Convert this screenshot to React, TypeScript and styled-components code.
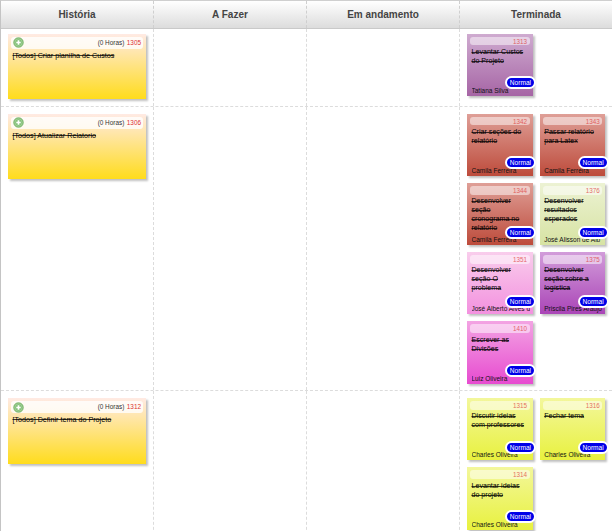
import React from 'react';
import styled, { createGlobalStyle } from 'styled-components';

const GlobalStyle = createGlobalStyle`
  * { box-sizing: border-box; }
  body { margin: 0; background: #fff; overflow: hidden; font-family: "Liberation Sans", Arial, sans-serif; }
`;

const Board = styled.main`
  width: 612px;
  height: 531px;
  overflow: hidden;
  border-left: 1px solid #c4c4c4;
  border-top: 1px solid #cfcfcf;
`;

const Columns = styled.div`
  display: grid;
  grid-template-columns: repeat(4, 153px);
`;

const HeaderRow = styled(Columns)`
  height: 28px;
  border-bottom: 1px solid #c9c9c9;
  background: linear-gradient(#ffffff, #dcdcdc);
`;

const Heading = styled.div`
  display: flex;
  align-items: center;
  justify-content: center;
  border-right: 1px dashed #cfcfcf;
  color: #444;
  font-size: 10px;
  line-height: 12px;
  font-weight: bold;
`;

const StoryRow = styled(Columns)<{ $height: number; $pad: number }>`
  height: ${p => p.$height}px;
  border-bottom: 1px dashed #dcdcdc;
  & > div { padding-top: ${p => p.$pad}px; }
`;

const Cell = styled.div`
  border-right: 1px dashed #dcdcdc;
  padding-left: 7px;
`;

const TaskCell = styled(Cell)`
  display: grid;
  grid-template-columns: 65.5px 65.5px;
  grid-auto-rows: 62.3px;
  align-content: start;
  gap: 7px 7.2px;
`;

const StoryCard = styled.article`
  width: 138px;
  height: 65.5px;
  padding: 3px;
  background: linear-gradient(#ffeae4, #ffdc1c);
  box-shadow: 1.5px 1.5px 2px rgba(0, 0, 0, 0.25);
`;

const StoryBar = styled.div`
  display: flex;
  align-items: center;
  height: 12px;
  padding: 0 2px;
  border-radius: 3px;
  background: rgba(255, 255, 255, 0.8);
`;

const Hours = styled.span`
  margin-left: auto;
  color: #333;
  font-size: 6.4px;
  line-height: 8px;
`;

const StoryId = styled.span`
  margin-left: 2.5px;
  color: #dc3131;
  font-size: 6.4px;
  line-height: 8px;
`;

const StoryTitle = styled.div`
  margin: 2px 0 0 1.5px;
  color: #000;
  font-size: 7.2px;
  line-height: 9px;
  white-space: nowrap;
  text-decoration: line-through rgba(0, 0, 0, 0.75);
`;

const TaskCard = styled.article<{ $from: string; $to: string }>`
  position: relative;
  display: flex;
  flex-direction: column;
  padding: 3px 3px 0;
  background: linear-gradient(${p => p.$from}, ${p => p.$to});
  box-shadow: 1.5px 1.5px 2px rgba(0, 0, 0, 0.25);
`;

const TaskId = styled.div`
  height: 8.8px;
  padding-right: 2.5px;
  border-radius: 3px;
  background: rgba(255, 255, 255, 0.5);
  color: #dc3131;
  text-align: right;
  font-size: 6.3px;
  line-height: 9px;
  & > span { opacity: 0.7; }
`;

const TaskTitle = styled.div`
  margin: 2.5px 0 0 1.5px;
  color: #000;
  font-size: 7.1px;
  line-height: 9px;
  white-space: pre;
  text-decoration: line-through rgba(0, 0, 0, 0.75);
`;

const Owner = styled.div`
  position: absolute;
  left: 4.5px;
  right: 3px;
  bottom: 1px;
  height: 8px;
  overflow: hidden;
  color: #111;
  font-size: 6.5px;
  line-height: 8px;
  white-space: nowrap;
`;

const Badge = styled.span`
  position: absolute;
  right: -3.4px;
  bottom: 6.7px;
  width: 31px;
  height: 13px;
  border: 2px solid #fff;
  border-radius: 7px;
  background: #0000e8;
  color: #fff;
  text-align: center;
  font-size: 6.6px;
  line-height: 9px;
`;

const AddGlyph = styled.svg`
  flex: none;
  width: 11px;
  height: 11px;
`;

function AddIcon() {
  return (
    <AddGlyph viewBox="0 0 20 20">
      <circle cx="10" cy="10" r="8.8" fill="#82bd75" stroke="#6faf62" strokeWidth="1.2" />
      <circle cx="10" cy="10" r="6.8" fill="#84c27a" stroke="#b3d9a9" strokeWidth="1" />
      <path d="M10 6v8M6 10h8" stroke="#fff" strokeWidth="3" />
    </AddGlyph>
  );
}

interface Task {
  id: number;
  title: string;
  owner: string;
  colors: [string, string];
}

interface Story {
  id: number;
  title: string;
  height: number;
  pad: number;
  tasks: Task[];
}

const plum: [string, string] = ['#cfabd0', '#a665a5'];
const red: [string, string] = ['#df9f97', '#bd4b3b'];
const green: [string, string] = ['#ecf2d3', '#d7e3a3'];
const pink: [string, string] = ['#f9cdec', '#f391df'];
const violet: [string, string] = ['#d29cda', '#aa45b7'];
const magenta: [string, string] = ['#f3a4e3', '#e74bd0'];
const yellow: [string, string] = ['#f3f79c', '#e8f13e'];

const stories: Story[] = [
  {
    id: 1305, title: '[Todos] Criar planilha de Custos', height: 78, pad: 4.5,
    tasks: [{ id: 1313, title: 'Levantar Custos\ndo Projeto', owner: 'Tatiana Silva', colors: plum }],
  },
  {
    id: 1306, title: '[Todos] Atualizar Relatorio', height: 284, pad: 6.6,
    tasks: [
      { id: 1342, title: 'Criar seções do\nrelatório', owner: 'Camila Ferreira', colors: red },
      { id: 1343, title: 'Passar relatório\npara Latex', owner: 'Camila Ferreira', colors: red },
      { id: 1344, title: 'Desenvolver\nseção\ncronograma no\nrelatório', owner: 'Camila Ferreira', colors: red },
      { id: 1376, title: 'Desenvolver\nresultados\nesperados', owner: 'José Alisson de Alb', colors: green },
      { id: 1351, title: 'Desenvolver\nseção O\nproblema', owner: 'José Alberto Alves d', colors: pink },
      { id: 1375, title: 'Desenvolver\nseção sobre a\nlogística', owner: 'Priscila Pires Araujo', colors: violet },
      { id: 1410, title: 'Escrever as\nDivisões', owner: 'Luiz Oliveira', colors: magenta },
    ],
  },
  {
    id: 1312, title: '[Todos] Definir tema do Projeto', height: 160, pad: 7.2,
    tasks: [
      { id: 1315, title: 'Discutir ideias\ncom professores', owner: 'Charles Oliveira', colors: yellow },
      { id: 1316, title: 'Fechar tema', owner: 'Charles Oliveira', colors: yellow },
      { id: 1314, title: 'Levantar ideias\ndo projeto', owner: 'Charles Oliveira', colors: yellow },
    ],
  },
];

export default function App() {
  return (
    <>
      <GlobalStyle />
      <Board>
        <HeaderRow>
          {['História', 'A Fazer', 'Em andamento', 'Terminada'].map(name => <Heading key={name}>{name}</Heading>)}
        </HeaderRow>
        {stories.map(story => (
          <StoryRow key={story.id} $height={story.height} $pad={story.pad}>
            <Cell>
              <StoryCard>
                <StoryBar>
                  <AddIcon />
                  <Hours>(0 Horas)</Hours>
                  <StoryId>{story.id}</StoryId>
                </StoryBar>
                <StoryTitle>{story.title}</StoryTitle>
              </StoryCard>
            </Cell>
            <Cell />
            <Cell />
            <TaskCell>
              {story.tasks.map(task => (
                <TaskCard key={task.id} $from={task.colors[0]} $to={task.colors[1]}>
                  <TaskId><span>{task.id}</span></TaskId>
                  <TaskTitle>{task.title}</TaskTitle>
                  <Owner>{task.owner}</Owner>
                  <Badge>Normal</Badge>
                </TaskCard>
              ))}
            </TaskCell>
          </StoryRow>
        ))}
      </Board>
    </>
  );
}
